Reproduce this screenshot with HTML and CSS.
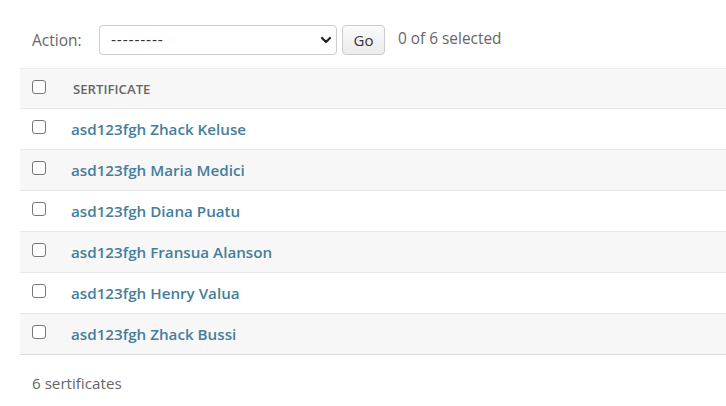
FILE: index.html
```html
<!DOCTYPE html>
<html>
<head>
<meta charset="utf-8">
<link rel="stylesheet" href="styles.css">
</head>
<body>
<div class="changelist">
  <div class="actions">
    <label class="action-label">Action:</label>
    <div class="select-wrap">
      <span class="select-value">---------</span>
      <svg class="chev" width="12" height="8" viewBox="0 0 12 8"><path d="M2 2 L6 6 L10 2" fill="none" stroke="#222" stroke-width="2.2" stroke-linecap="round" stroke-linejoin="round"/></svg>
    </div>
    <button class="go">Go</button>
    <span class="counter">0 of 6 selected</span>
  </div>
  <div class="table">
    <div class="row head"><span class="cb"></span><span class="col-title">SERTIFICATE</span></div>
    <div class="row"><span class="cb"></span><a class="link">asd123fgh Zhack Keluse</a></div>
    <div class="row alt"><span class="cb"></span><a class="link">asd123fgh Maria Medici</a></div>
    <div class="row"><span class="cb"></span><a class="link">asd123fgh Diana Puatu</a></div>
    <div class="row alt"><span class="cb"></span><a class="link">asd123fgh Fransua Alanson</a></div>
    <div class="row"><span class="cb"></span><a class="link">asd123fgh Henry Valua</a></div>
    <div class="row alt last"><span class="cb"></span><a class="link">asd123fgh Zhack Bussi</a></div>
  </div>
  <p class="paginator">6 sertificates</p>
</div>
</body>
</html>
```
FILE: styles.css
```css
html, body { margin: 0; padding: 0; background: #fff; }
body { font-family: "Open Sans", "Noto Sans", sans-serif; color: #333; }
.changelist { padding: 25px 0 0 20px; }
.actions { display: flex; align-items: center; height: 30px; padding-left: 12px; }
.action-label { font-size: 15.5px; color: #666; width: 67px; }
.select-wrap { display: flex; align-items: center; justify-content: space-between; padding: 0 4px 0 11px; box-sizing: border-box; width: 238px; height: 30px; border: 1px solid #ccc; border-radius: 4px; }
.select-value { font-family: "DejaVu Sans", sans-serif; font-size: 14px; color: #333; letter-spacing: 0.8px; }
.go { margin-left: 5px; width: 43px; height: 30px; border: 1px solid #ccc; border-radius: 4px; background: linear-gradient(#fafafa, #ececec); font-family: inherit; font-size: 15px; color: #333; padding: 0; }
.counter { margin-left: 13px; font-size: 15.4px; color: #666; margin-top: -4px; }
.table { margin-top: 13px; border-top: 1px solid #eee; }
.row { display: flex; align-items: center; height: 40px; border-bottom: 1px solid #e8e8e8; padding-left: 12px; }
.row.alt { background: #f7f7f7; }
.row.head { height: 39px; background: #f7f7f7; border-bottom-color: #e8e8e8; }
.row.last { border-bottom-color: #ddd; }
.cb { width: 12px; height: 12px; border: 1px solid #767676; border-radius: 3px; background: #fff; margin-top: -4px; }
.col-title { margin-left: 27px; font-size: 13.2px; font-weight: 600; color: #666; }
.link { margin-left: 25px; font-size: 15.2px; font-weight: 600; color: #447e9b; }
.paginator { margin: 18px 0 0 12px; font-size: 15.2px; color: #666; }
```
